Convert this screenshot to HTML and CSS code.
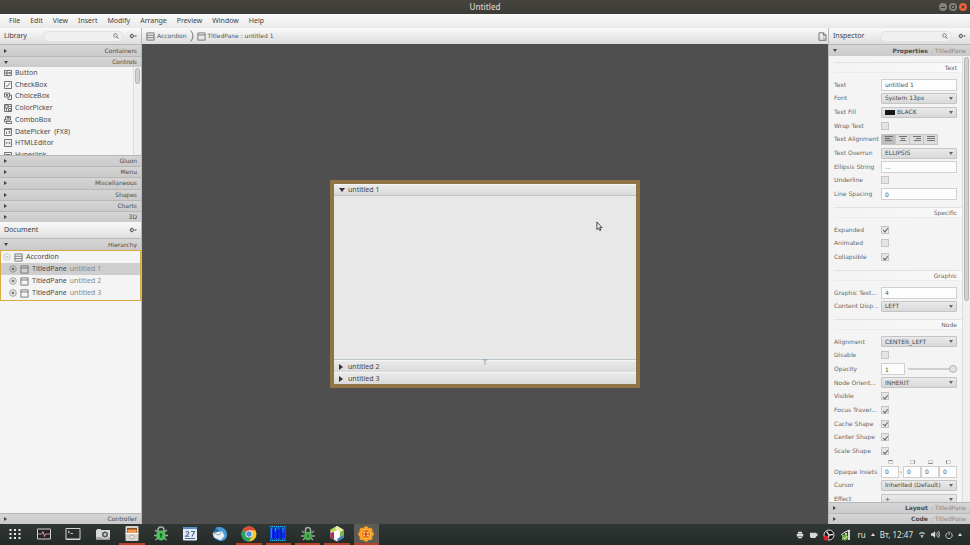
FILE: index.html
```html
<!DOCTYPE html>
<html lang="en">
<head>
<meta charset="utf-8">
<title>Untitled</title>
<link rel="stylesheet" href="styles.css">
</head>
<body>
<svg class="defs" aria-hidden="true">
  <symbol id="i-acc" viewBox="0 0 10 10"><path d="M1 1h8v8H1zM1 3.6h8M1 6.2h8" fill="none" stroke="#666" stroke-width=".9"/></symbol>
  <symbol id="i-pane" viewBox="0 0 10 10"><path d="M1 1h8v8H1zM1 3.3h8" fill="none" stroke="#666" stroke-width=".9"/></symbol>
  <symbol id="i-search" viewBox="0 0 8 8"><circle cx="3.3" cy="3.3" r="2.4" fill="none" stroke="#666"/><path d="M5 5l2.500 2.500" stroke="#666" stroke-width="1.200"/></symbol>
  <symbol id="i-gear" viewBox="0 0 8 8"><circle cx="3" cy="4" r="1.500" fill="none" stroke="#555"/><path d="M3 1.600v.8M3 5.600v.8M.600 4h.8M1.300 2.300l.5.5M1.300 5.700l.5-.5" stroke="#555" stroke-width=".8"/><path d="M5 3.400h3L6.500 5z" fill="#555"/></symbol>
  <symbol id="i-plus" viewBox="0 0 8 8"><circle cx="4" cy="4" r="3.300" fill="none" stroke="#888" stroke-width=".8"/><path d="M2.500 4h3M4 2.500v3" stroke="#555"/></symbol>
  <symbol id="i-minus" viewBox="0 0 8 8"><circle cx="4" cy="4" r="3.300" fill="none" stroke="#bbb" stroke-width=".8"/><path d="M2.500 4h3" stroke="#aaa"/></symbol>
</svg>

<header class="titlebar">
  <h1>Untitled</h1>
  <div class="winbtns">
    <button aria-label="Minimize"><svg viewBox="0 0 8 8"><path d="M2 4.5h4"/></svg></button>
    <button aria-label="Maximize"><svg viewBox="0 0 8 8"><path d="M2.5 2.5h3v3h-3z"/></svg></button>
    <button class="close" aria-label="Close"><svg viewBox="0 0 8 8"><path d="M2.5 2.5l3 3m0-3l-3 3"/></svg></button>
  </div>
</header>
<nav class="menubar">
  <button>File</button><button>Edit</button><button>View</button><button>Insert</button><button>Modify</button><button>Arrange</button><button>Preview</button><button>Window</button><button>Help</button>
</nav>

<main class="workspace">
  <aside class="left">
    <div class="panelhead">
      <h2>Library</h2>
      <label class="search"><input type="text" aria-label="Search library"><svg><use href="#i-search"/></svg></label>
      <button class="gear" aria-label="Library options"><svg><use href="#i-gear"/></svg></button>
    </div>
    <button class="fold">Containers</button>
    <button class="fold open">Controls</button>
    <div class="library">
      <ul>
        <li><svg viewBox="0 0 8 8"><path d="M.5 1.5h7v5h-7z"/><path d="M2 3h2v2H2zM5 3l1.5 2M6.5 3L5 5"/></svg>Button</li>
        <li><svg viewBox="0 0 8 8"><path d="M.5.5h7v7h-7zM2 4.5l1 1.2L6 2"/></svg>CheckBox</li>
        <li><svg viewBox="0 0 8 8"><path d="M.5 1h5v4h-5zM5 3h2.5v4.5H4V5"/><path d="M2 2.5h2L3 4z" fill="#444"/></svg>ChoiceBox</li>
        <li><svg viewBox="0 0 8 8"><path d="M.5.5h7v7h-7z"/><path d="M1 1h3v3H1zM4.500 4.500h2.500v2.500h-2.500z" fill="#888" stroke="none"/><path d="M4 2.500h3M2.500 4v3"/></svg>ColorPicker</li>
        <li><svg viewBox="0 0 8 8"><path d="M1.500.5h5v3.500h-5zM.5 3v3h2M2.500 5.500h5v2h-5z"/><path d="M3 1.500h2.500L4.200 3z" fill="#444"/></svg>ComboBox</li>
        <li><svg viewBox="0 0 8 8"><path d="M.5.5h7v7h-7zM.5 1.500h7M2.500 3.500v2.500M4.500 3.500h1.500L5 6"/></svg>DatePicker &nbsp;(FX8)</li>
        <li><svg viewBox="0 0 8 8"><path d="M.5.5h7v7h-7zM3 2.800L1.800 4 3 5.200M5 2.800L6.200 4 5 5.200M3.500 4h1"/></svg>HTMLEditor</li>
        <li><svg viewBox="0 0 8 8"><path d="M.5 1.500h7v5h-7zM1.500 3.500h5"/></svg>Hyperlink</li>
      </ul>
      <div class="track"><span></span></div>
    </div>
    <div class="folds">
      <button class="fold">Gluon</button>
      <button class="fold">Menu</button>
      <button class="fold">Miscellaneous</button>
      <button class="fold">Shapes</button>
      <button class="fold">Charts</button>
      <button class="fold">3D</button>
    </div>
    <div class="panelhead">
      <h2>Document</h2>
      <button class="gear" aria-label="Document options"><svg><use href="#i-gear"/></svg></button>
    </div>
    <button class="fold open">Hierarchy</button>
    <ul class="tree">
      <li class="root"><svg class="tog"><use href="#i-minus"/></svg><svg class="node"><use href="#i-acc"/></svg><span>Accordion</span></li>
      <li class="sel"><svg class="tog"><use href="#i-plus"/></svg><svg class="node"><use href="#i-pane"/></svg><span>TitledPane</span><em>untitled 1</em></li>
      <li><svg class="tog"><use href="#i-plus"/></svg><svg class="node"><use href="#i-pane"/></svg><span>TitledPane</span><em>untitled 2</em></li>
      <li><svg class="tog"><use href="#i-plus"/></svg><svg class="node"><use href="#i-pane"/></svg><span>TitledPane</span><em>untitled 3</em></li>
    </ul>
    <div class="fill"></div>
    <button class="fold">Controller</button>
  </aside>

  <section class="center">
    <div class="crumbs">
      <svg class="node"><use href="#i-acc"/></svg><a href="#">Accordion</a>
      <svg class="chev" viewBox="0 0 4 12"><path d="M.5.500Q3 3 3 6T.5 11.500"/></svg>
      <svg class="node"><use href="#i-pane"/></svg><a href="#">TitledPane : untitled 1</a>
      <svg class="doc" viewBox="0 0 9 9"><path d="M1 .8h4.500L8 3.300v5H1zM5.500.8v2.500H8M5 5.500l2 2"/></svg>
    </div>
    <div class="canvas">
      <div class="accordion">
        <button class="tp open">untitled 1</button>
        <div class="content"><svg class="pointer" viewBox="0 0 8 12"><path d="M1 .8v8.700l2-1.800 1.300 3 1.300-.6-1.300-2.900h2.600z"/></svg><svg class="tmark" viewBox="0 0 6 6"><path d="M.5.8h5M3 .8v5"/></svg></div>
        <button class="tp">untitled 2</button>
        <button class="tp">untitled 3</button>
      </div>
    </div>
  </section>

  <aside class="right">
    <div class="panelhead">
      <h2>Inspector</h2>
      <label class="search"><input type="text" aria-label="Search properties"><svg><use href="#i-search"/></svg></label>
      <button class="gear" aria-label="Inspector options"><svg><use href="#i-gear"/></svg></button>
    </div>
    <button class="fold open strong">Properties <i>: TitledPane</i></button>
    <div class="inspector">
      <form>
        <h3>Text</h3>
        <div class="group nine">
          <label for="p1">Text</label><input id="p1" type="text" value="untitled 1">
          <label for="p2">Font</label><span class="dd"><select id="p2"><option>System 13px</option></select></span>
          <label for="p3">Text Fill</label><span class="dd swatch"><select id="p3"><option>BLACK</option></select></span>
          <label for="p4">Wrap Text</label><input id="p4" type="checkbox">
          <span>Text Alignment</span>
          <div class="align">
            <button type="button" class="on" aria-label="Left"><svg viewBox="0 0 8 6"><path d="M0 .5h8M0 2.500h5M0 4.500h7"/></svg></button>
            <button type="button" aria-label="Center"><svg viewBox="0 0 8 6"><path d="M0 .5h8M2 2.500h4M1 4.500h6"/></svg></button>
            <button type="button" aria-label="Right"><svg viewBox="0 0 8 6"><path d="M0 .5h8M3 2.500h5M1 4.500h7"/></svg></button>
            <button type="button" aria-label="Justify"><svg viewBox="0 0 8 6"><path d="M0 .5h8M0 2.500h8M0 4.500h8"/></svg></button>
          </div>
          <label for="p5">Text Overrun</label><span class="dd"><select id="p5"><option>ELLIPSIS</option></select></span>
          <label for="p6">Ellipsis String</label><input id="p6" type="text" value="...">
          <label for="p7">Underline</label><input id="p7" type="checkbox">
          <label for="p8">Line Spacing</label><input id="p8" type="text" value="0">
        </div>
        <h3>Specific</h3>
        <div class="group three">
          <label for="p9">Expanded</label><input id="p9" type="checkbox" checked>
          <label for="p10">Animated</label><input id="p10" type="checkbox">
          <label for="p11">Collapsible</label><input id="p11" type="checkbox" checked>
        </div>
        <h3>Graphic</h3>
        <div class="group two">
          <label for="p12">Graphic Text...</label><input id="p12" type="text" value="4">
          <label for="p13">Content Disp...</label><span class="dd"><select id="p13"><option>LEFT</option></select></span>
        </div>
        <h3>Node</h3>
        <div class="group nine">
          <label for="p14">Alignment</label><span class="dd"><select id="p14"><option>CENTER_LEFT</option></select></span>
          <label for="p15">Disable</label><input id="p15" type="checkbox">
          <label for="p16">Opacity</label><div class="opacity"><input id="p16" type="text" value="1"><input type="range" aria-label="Opacity" value="100"></div>
          <label for="p17">Node Orient...</label><span class="dd"><select id="p17"><option>INHERIT</option></select></span>
          <label for="p18">Visible</label><input id="p18" type="checkbox" checked>
          <label for="p19">Focus Traver...</label><input id="p19" type="checkbox" checked>
          <label for="p20">Cache Shape</label><input id="p20" type="checkbox" checked>
          <label for="p21">Center Shape</label><input id="p21" type="checkbox" checked>
          <label for="p22">Scale Shape</label><input id="p22" type="checkbox" checked>
        </div>
        <div class="sides"><i class="t"></i><i class="r"></i><i class="b"></i><i class="l"></i></div>
        <div class="group three">
          <span>Opaque Insets</span>
          <div class="insets"><input type="text" aria-label="Top" value="0"><b>›</b><input type="text" aria-label="Right" value="0"><input type="text" aria-label="Bottom" value="0"><input type="text" aria-label="Left" value="0"></div>
          <label for="p23">Cursor</label><span class="dd"><select id="p23"><option>Inherited (Default)</option></select></span>
          <label for="p24">Effect</label><span class="dd"><select id="p24"><option>+</option></select></span>
        </div>
      </form>
      <div class="track"><span></span></div>
    </div>
    <button class="fold strong">Layout <i>: TitledPane</i></button>
    <button class="fold strong">Code <i>: TitledPane</i></button>
  </aside>
</main>

<footer class="taskbar">
  <div class="apps">
    <button aria-label="Applications"><svg viewBox="0 0 16 16"><path d="M2.500 4h11M2.500 8h11M2.500 12h11" stroke="#e8e8e8" stroke-width="2" stroke-dasharray="2 2.500"/></svg></button>
    <button aria-label="System monitor"><svg viewBox="0 0 16 16"><rect x="1" y="2.500" width="14" height="11" rx="1" fill="#d0d0d0"/><rect x="2" y="3.500" width="12" height="9" fill="#2a222b"/><path d="M2 8h4l1-2.500 1.500 5 1-2.500H14" fill="none" stroke="#d9b5b5" stroke-width=".8"/></svg></button>
    <button aria-label="Terminal"><svg viewBox="0 0 16 16"><rect x=".5" y="2" width="15" height="12" rx="1" fill="#d4d4d0"/><rect x="1.500" y="3" width="13" height="9.500" fill="#2b302e"/><path d="M3 5l1.500 1L3 7M5.500 7.500H8" fill="none" stroke="#eee" stroke-width=".8"/></svg></button>
    <button aria-label="Screenshot"><svg viewBox="0 0 16 16"><path d="M2 3h4v1h9v9.500H1V4h1z" fill="#d8d8d8"/><path d="M1 11h14v2.500H1z" fill="#aaa"/><circle cx="10" cy="8.500" r="3.700" fill="#555" stroke="#f2f2f2"/><circle cx="10" cy="8.500" r="1.400" fill="#bcd"/></svg></button>
    <button class="run" aria-label="Files"><svg viewBox="0 0 16 16"><rect x="1.500" y="0" width="13" height="15" rx="1" fill="#d8d2c8"/><path d="M3 2h10v5H3z" fill="#8b4a22"/><path d="M3.500 3.500h9V7h-9z" fill="#f09a52"/><path d="M1.500 7h13v1h-13z" fill="#fff"/><rect x="6" y="9.500" width="4" height="3" rx="1" fill="#eee" stroke="#999" stroke-width=".7"/></svg></button>
    <button aria-label="Secure tunnel"><svg viewBox="0 0 16 16"><path d="M2 4l2.500 2M14 4l-2.500 2M1 9.500h3M15 9.500h-3M2.500 14l2.500-2M13.500 14l-2.500-2" stroke="#9aaba0" stroke-width="1.500"/><path d="M5 6V4a3 3 0 0 1 6 0v2" fill="none" stroke="#9bb4a3" stroke-width="1.600"/><ellipse cx="8" cy="9.500" rx="4.700" ry="5" fill="#4cc35a"/><circle cx="8" cy="8.500" r="1.200" fill="#145b22"/><path d="M8 8v4" stroke="#145b22" stroke-width="1.300"/></svg></button>
    <button aria-label="Calendar"><svg viewBox="0 0 16 16"><rect x="1" y="1" width="14" height="13.500" rx="1" fill="#e4ebf7"/><path d="M1 2h14" stroke="#5f8cca" stroke-width="2"/><path d="M3.800 6.500q1.500-2 3 0 0 1.200-3 3.700h3.400M9 5.500h3.500L10 10.500M3 12.500h10" fill="none" stroke="#4f6b98" stroke-width="1.100"/></svg></button>
    <button aria-label="Thunderbird"><svg viewBox="0 0 16 16"><circle cx="8" cy="8" r="7" fill="#226eaa"/><path d="M3 2c5-3 13 1 12 8-1 4-4 5-7 5 5-4 1-10-5-13z" fill="#4b9ad5"/><path d="M.5 7l9.500-2 2.500 5-4 4.500-6.500-3z" fill="#e9eef5"/><path d="M1 7l6 2 3-4" fill="none" stroke="#91a6bb"/></svg></button>
    <button class="run" aria-label="Chrome"><svg viewBox="0 0 16 16"><circle cx="8" cy="8" r="7.500" fill="#f5c932"/><path d="M8 8L1.500 4.250A7.500 7.500 0 0 1 14.500 4.250H8z" fill="#dd4b3e"/><path d="M8 8L1.500 4.250A7.500 7.500 0 0 0 8 15.500L11.250 9.900z" fill="#28a35a"/><circle cx="8" cy="8" r="3.600" fill="#f6f6f6"/><circle cx="8" cy="8" r="2.700" fill="#4c8bea"/></svg></button>
    <button class="run" aria-label="Memory monitor"><svg viewBox="0 0 16 16"><path d="M0 0h16v15H0z" fill="#0a56c4"/><path d="M1 4h14v8H1z" fill="#0a28ee"/><path d="M3.500 1v13M7.500 3v10M11 1v13" stroke="#061f77" stroke-width="1.100"/><path d="M0 .5h16M0 14.500h16" stroke="#30b5ed" stroke-dasharray="1 1"/><path d="M1.500 2v10M5.500 2v4M13 2v5" stroke="#3296ff" stroke-width=".8"/></svg></button>
    <button class="run" aria-label="Secure tunnel window"><svg viewBox="0 0 16 16"><path d="M2 5l2.500 2M14 5l-2.500 2M1 10h3M15 10h-3M3 14l2-2M13 14l-2-2" stroke="#92a497" stroke-width="1.400"/><path d="M5.500 7V4a2.500 2.500 0 0 1 5 0v3" fill="none" stroke="#9bb4a3" stroke-width="1.500"/><ellipse cx="8" cy="10" rx="4" ry="4.300" fill="#4caf50"/><path d="M8 8.500v3" stroke="#145b22" stroke-width="1.300"/></svg></button>
    <button class="run" aria-label="NetBeans"><svg viewBox="0 0 16 16"><path d="M8 0l6.500 3.800v8L8 15.500l-6.500-3.700v-8z" fill="#e8ecea"/><path d="M8 0L1.500 3.800v3L8 4z" fill="#b7d84b"/><path d="M1.500 7v4.800L5 13.800V6z" fill="#b9285e"/><path d="M8 0l6.500 3.800L11 6 6 3z" fill="#efefa7"/><path d="M14.500 4v5L11 11V6z" fill="#79b947"/><path d="M8 15.500l6.500-3.700V9L9 12z" fill="#3e78bc"/><path d="M5 6l3-1.500L11 6v5l-3 1.500L5 11z" fill="#fff"/></svg></button>
    <button class="run active" aria-label="Scene Builder"><svg viewBox="0 0 16 16"><g fill="#f7a021"><circle cx="8" cy="2.700" r="2.500"/><circle cx="12" cy="4.300" r="2.500"/><circle cx="13.300" cy="8" r="2.500"/><circle cx="12" cy="11.700" r="2.500"/><circle cx="8" cy="13.300" r="2.500"/><circle cx="4" cy="11.700" r="2.500"/><circle cx="2.700" cy="8" r="2.500"/><circle cx="4" cy="4.300" r="2.500"/></g><circle cx="8" cy="8" r="4.600" fill="#e8721a" stroke="#ffd16a" stroke-width=".8"/><path d="M5.500 6.300l5 3.400M10.500 6.300l-5 3.400" stroke="#fff0c0" stroke-width="1.200"/><circle cx="8" cy="8" r="1.500" fill="#d53918"/></svg></button>
  </div>
  <div class="tray">
    <svg viewBox="0 0 10 10"><path d="M2.500 1h5v2h-5zM1 3.500h8v3.500H1zM2.500 7.500h5V9h-5z" fill="#d9d9d6"/></svg>
    <svg class="wide" viewBox="0 0 10 10"><path d="M1 3h7v1h1.500v3H8L7 9H2L1 7z" fill="#d9d9d6"/></svg>
    <svg class="big" viewBox="0 0 12 12"><circle cx="6" cy="6" r="5" fill="#111" stroke="#ddd"/><path d="M6 6L3.500 2.500M6 6l4-.5M6 6l-1 4" stroke="#ddd" stroke-width="1.300"/><circle cx="3" cy="9" r="2.500" fill="#d5222a"/></svg>
    <svg class="big" viewBox="0 0 12 12"><path d="M2 11V6h2v5zM5 11V4h2v7zM8 11V1h2v10z" fill="#cbd8c7"/><path d="M1 6l4-3 5-2" fill="none" stroke="#eee"/><circle cx="5" cy="8.500" r="3" fill="#61a832"/><path d="M3.500 8.500l1.300 1.300 2.200-2.600" fill="none" stroke="#fff"/></svg>
    <span>ru</span>
    <i class="up"></i>
    <time>Вт, 12:47</time>
    <svg viewBox="0 0 10 10"><path d="M1 3Q5-.2 9 3L8 4.300Q5 2 2 4.300zM3 5.500q2-1.500 4 0L5 9z" fill="#b8bab6"/></svg>
    <svg class="wide" viewBox="0 0 10 10"><path d="M0 3.500h2L4.500 1v8L2 6.500H0z" fill="#ddd"/><path d="M5.500 3.500q1.200 1.500 0 3M7 2q2.500 3 0 6M8.500 1q2.500 4 0 8" fill="none" stroke="#ddd" stroke-width=".8"/></svg>
    <svg viewBox="0 0 10 10"><path d="M3 2a4 4 0 1 0 4 0M5 .5V5" fill="none" stroke="#ddd" stroke-width="1.100"/></svg>
    <i class="up"></i>
  </div>
</footer>
</body>
</html>
```
FILE: styles.css
```css
:root {
  --ui: "DejaVu Sans", sans-serif;
  --list: "Noto Sans", "DejaVu Sans", sans-serif;
}
* { box-sizing: border-box; }
body {
  margin: 0;
  height: 100vh;
  display: flex;
  flex-direction: column;
  overflow: hidden;
  font: 6px/8px var(--ui);
  color: #555;
  background: #4f4f4f;
}
button, input, select { font: inherit; color: inherit; margin: 0; padding: 0; border: 0; background: none; border-radius: 0; }
h1, h2, h3, ul { margin: 0; padding: 0; font-weight: normal; list-style: none; }
svg { display: block; flex: none; }
i, em { font-style: normal; }
a { color: inherit; text-decoration: none; }
.defs { position: absolute; width: 0; height: 0; }

.titlebar { flex: none; height: 14px; display: grid; grid-template-columns: 1fr auto 1fr; align-items: center; padding: 0 3px; background: linear-gradient(#45443e, #3c3b36); }
.titlebar h1 { grid-column: 2; font: 500 8px/12px var(--list); color: #d8d5cc; }
.winbtns { display: flex; justify-content: flex-end; gap: 2px; }
.winbtns button { width: 8px; height: 8px; border-radius: 50%; background: #85827a; }
.winbtns .close { background: #e9603a; }
.winbtns path { fill: none; stroke: #3b3a35; }

.menubar { flex: none; height: 14px; display: flex; align-items: center; gap: 10px; padding: 0 9px; font: 7px/10px var(--list); color: #444; background: linear-gradient(#fafafa, #e9e9e9); }

.workspace { flex: 1; min-height: 0; display: grid; grid-template-columns: 142px 1fr 142px; }
.left, .right { min-width: 0; min-height: 0; display: flex; flex-direction: column; background: #f4f4f4; }
.left { border-right: 1px solid #bbb; }
.right { border-left: 1px solid #bbb; }
.panelhead { flex: none; height: 16px; display: flex; align-items: center; gap: 6px; padding: 0 4px; background: linear-gradient(#fafafa, #dedede); }
.panelhead h2 { font: 7px/10px var(--list); color: #444; }
.panelhead svg { width: 8px; height: 8px; }
.search { flex: 1; display: flex; align-items: center; height: 11px; margin-left: 10px; padding: 0 3px; border-radius: 6px; background: #f0f0f0; border: 1px solid #e1e1e1; }
.search input { flex: 1; width: 0; min-width: 0; }
.search svg { width: 6px; height: 6px; }
.gear { margin-left: auto; }

.fold { flex: none; width: 100%; height: 11px; display: flex; align-items: center; justify-content: flex-end; gap: 3px; padding: 0 4px; border-top: 1px solid #b7b7b7; background: linear-gradient(#d5d5d5, #cacaca); color: #4c4c4c; }
.panelhead + .fold { height: 12px; }
.fold::before { content: ""; margin-right: auto; border: 2px solid transparent; border-left: 3px solid #444; border-right: 0; }
.fold.open::before { border: 2px solid transparent; border-top: 3px solid #444; border-bottom: 0; }
.strong { font-weight: bold; }
.strong i { font-weight: normal; color: #888; }
.folds { flex: none; height: 67px; display: grid; grid-auto-rows: 1fr; }
.folds .fold { height: auto; }

.library { flex: none; height: 88px; display: flex; overflow: hidden; background: #f4f4f4; }
.library ul { flex: 1; height: 94px; display: grid; grid-auto-rows: 1fr; padding-left: 4px; font: 7px/10px var(--list); color: #4c4c4c; }
.library li { display: flex; align-items: center; gap: 3px; }
.library li svg { width: 8px; height: 8px; }
.library li path { fill: none; stroke: #555; stroke-width: .8; }
.track { width: 8px; padding: 1px; border-left: 1px solid #ddd; background: #f0f0f0; }
.track span { display: block; height: 16px; border: 1px solid #b5b5b5; border-radius: 3px; background: #d0d0d0; }

.tree { flex: none; padding-bottom: 1px; border: 1px solid #d9ab45; font: 7px/10px var(--list); color: #4c4c4c; }
.tree li { height: 12px; display: flex; align-items: center; gap: 3px; padding-left: 8px; }
.tree .root { padding-left: 2px; }
.tree .sel { background: #cecece; }
.tree em { color: #888; }
.tog { width: 8px; height: 8px; }
.node { width: 9px; height: 9px; }
.fill { flex: 1; background: #f4f4f4; }

.center { min-width: 0; display: flex; flex-direction: column; }
.crumbs { flex: none; height: 16px; display: flex; align-items: center; gap: 2px; padding: 0 1px 0 4px; background: linear-gradient(#fafafa, #dcdcdc); }
.chev { width: 4px; height: 12px; margin: 0 1px; }
.chev path, .doc path { fill: none; stroke: #777; }
.doc { width: 9px; height: 9px; margin-left: auto; }
.canvas { flex: 1; display: flex; align-items: center; justify-content: center; background: #4f4f4f; }
.accordion { width: 310px; height: 208px; display: flex; flex-direction: column; border: 4px solid #8f7445; background: #e8e8e8; }
.tp { flex: none; height: 12px; display: flex; align-items: center; gap: 4px; padding: 0 5px; border-top: 1px solid #f5f5f5; background: linear-gradient(#eaeaea, #dadada); font: 7px/10px var(--list); color: #444; }
.tp.open { height: 12px; border-bottom: 1px solid #c3c3c3; }
.tp::before { content: ""; margin: 0 1px 0 0; border: 3px solid transparent; border-left: 4px solid #333; border-right: 0; }
.tp.open::before { margin: 0 -1px 0 0; border: 3px solid transparent; border-top: 4px solid #333; border-bottom: 0; }
.content { flex: 1; position: relative; border-bottom: 1px solid #bac5c9; }
.pointer { position: absolute; right: 33px; top: 25px; width: 7px; height: 11px; }
.pointer path { fill: #eee; stroke: #333; }
.tmark { position: absolute; left: 50%; bottom: -6px; width: 6px; height: 6px; margin-left: -3px; }
.tmark path { fill: none; stroke: #8ba5b2; }

.inspector { flex: 1; min-height: 0; display: flex; overflow: hidden; }
.inspector form { flex: 1; min-width: 0; padding: 0 5px; opacity: .9; }
.inspector .track span { height: 244px; }
.inspector h3 { height: 11px; margin: 6px -5px 5px 0; padding-right: 5px; border-top: 1px solid #e1e1e1; border-bottom: 1px solid #ebebeb; text-align: right; font: 6px/10px var(--ui); background: linear-gradient(90deg, #f4f4f4, #fafafa); }
.group { display: grid; grid-template-columns: 47px minmax(0, 1fr); grid-auto-rows: 1fr; align-items: center; white-space: nowrap; color: #555; }
.nine { height: 123px; }
.three { height: 41px; }
.two { height: 27px; }
input[type="text"] { min-width: 0; }
.group input[type="text"] { width: 100%; height: 12px; padding: 0 3px; border: 1px solid #cdcdcd; background: #fff; color: #444; }
.dd { position: relative; display: block; height: 11px; border: 1px solid #c0c0c0; border-radius: 1px; background: linear-gradient(#e9e9e9, #d6d6d6); color: #333; }
.dd select { display: block; width: 100%; height: 9px; padding: 0 3px; appearance: none; }
.dd::after { content: ""; position: absolute; right: 3px; top: 3px; border: 2px solid transparent; border-top: 3px solid #555; border-bottom: 0; pointer-events: none; }
.swatch { display: flex; align-items: center; padding-left: 3px; }
.swatch::before { content: ""; flex: none; width: 10px; height: 5px; background: #000; }
.swatch select { padding-left: 2px; }
input[type="checkbox"] { appearance: none; width: 8px; height: 8px; display: grid; place-items: center; border: 1px solid #c0c0c0; background: #e4e4e4; }
input[type="checkbox"]:checked::before { content: ""; width: 2px; height: 4px; border: solid #555; border-width: 0 1px 1px 0; transform: rotate(40deg); }
.align { display: flex; width: 57px; border: 1px solid #c0c0c0; background: #dcdcdc; }
.align button { flex: 1; height: 9px; display: grid; place-items: center; border-right: 1px solid #c0c0c0; }
.align button:last-child { border-right: 0; }
.align .on { background: #b8b8b8; }
.align svg { width: 8px; height: 6px; }
.align path { stroke: #555; stroke-width: .9; }
.opacity { display: grid; grid-template-columns: 24px 1fr; gap: 3px; align-items: center; }
input[type="range"] { appearance: none; width: 100%; min-width: 0; height: 8px; background: linear-gradient(#ccc, #ccc) center / 100% 2px no-repeat; }
input[type="range"]::-webkit-slider-thumb { appearance: none; width: 8px; height: 8px; border: 1px solid #aaa; border-radius: 50%; background: #e2e2e2; }
.sides { height: 7px; margin-left: 47px; display: grid; grid-template-columns: 18px 4px repeat(3, 1fr); justify-items: center; align-items: center; }
.sides i { width: 5px; height: 4px; border: 1px solid #ccc; }
.sides .t { border-top-color: #777; }
.sides .r { grid-column: 3; border-right-color: #777; }
.sides .b { border-bottom-color: #777; }
.sides .l { border-left-color: #777; }
.insets { display: grid; grid-template-columns: 18px 4px repeat(3, 1fr); }
.insets b { font-weight: normal; line-height: 11px; text-align: center; }

.taskbar { flex: none; height: 21px; display: flex; justify-content: space-between; background: linear-gradient(#303735, #242a28); }
.apps { width: 381px; display: grid; grid-template-columns: repeat(13, 1fr); }
.apps button { display: grid; place-items: center; margin: 0 2px; border-bottom: 2px solid transparent; }
.apps svg { width: 16px; height: 16px; }
.apps .run { border-bottom-color: #b8412a; }
.apps .active { background: #5d5b55; }
.tray { display: flex; align-items: center; gap: 5px; padding-right: 8px; font: 8px/12px var(--list); color: #e0e0dc; }
.tray svg { width: 8px; height: 8px; }
.tray .wide { width: 9px; height: 9px; }
.tray .big { width: 12px; height: 12px; }
.up { border: 2px solid transparent; border-bottom: 3px solid #ddd; border-top: 0; }
```
